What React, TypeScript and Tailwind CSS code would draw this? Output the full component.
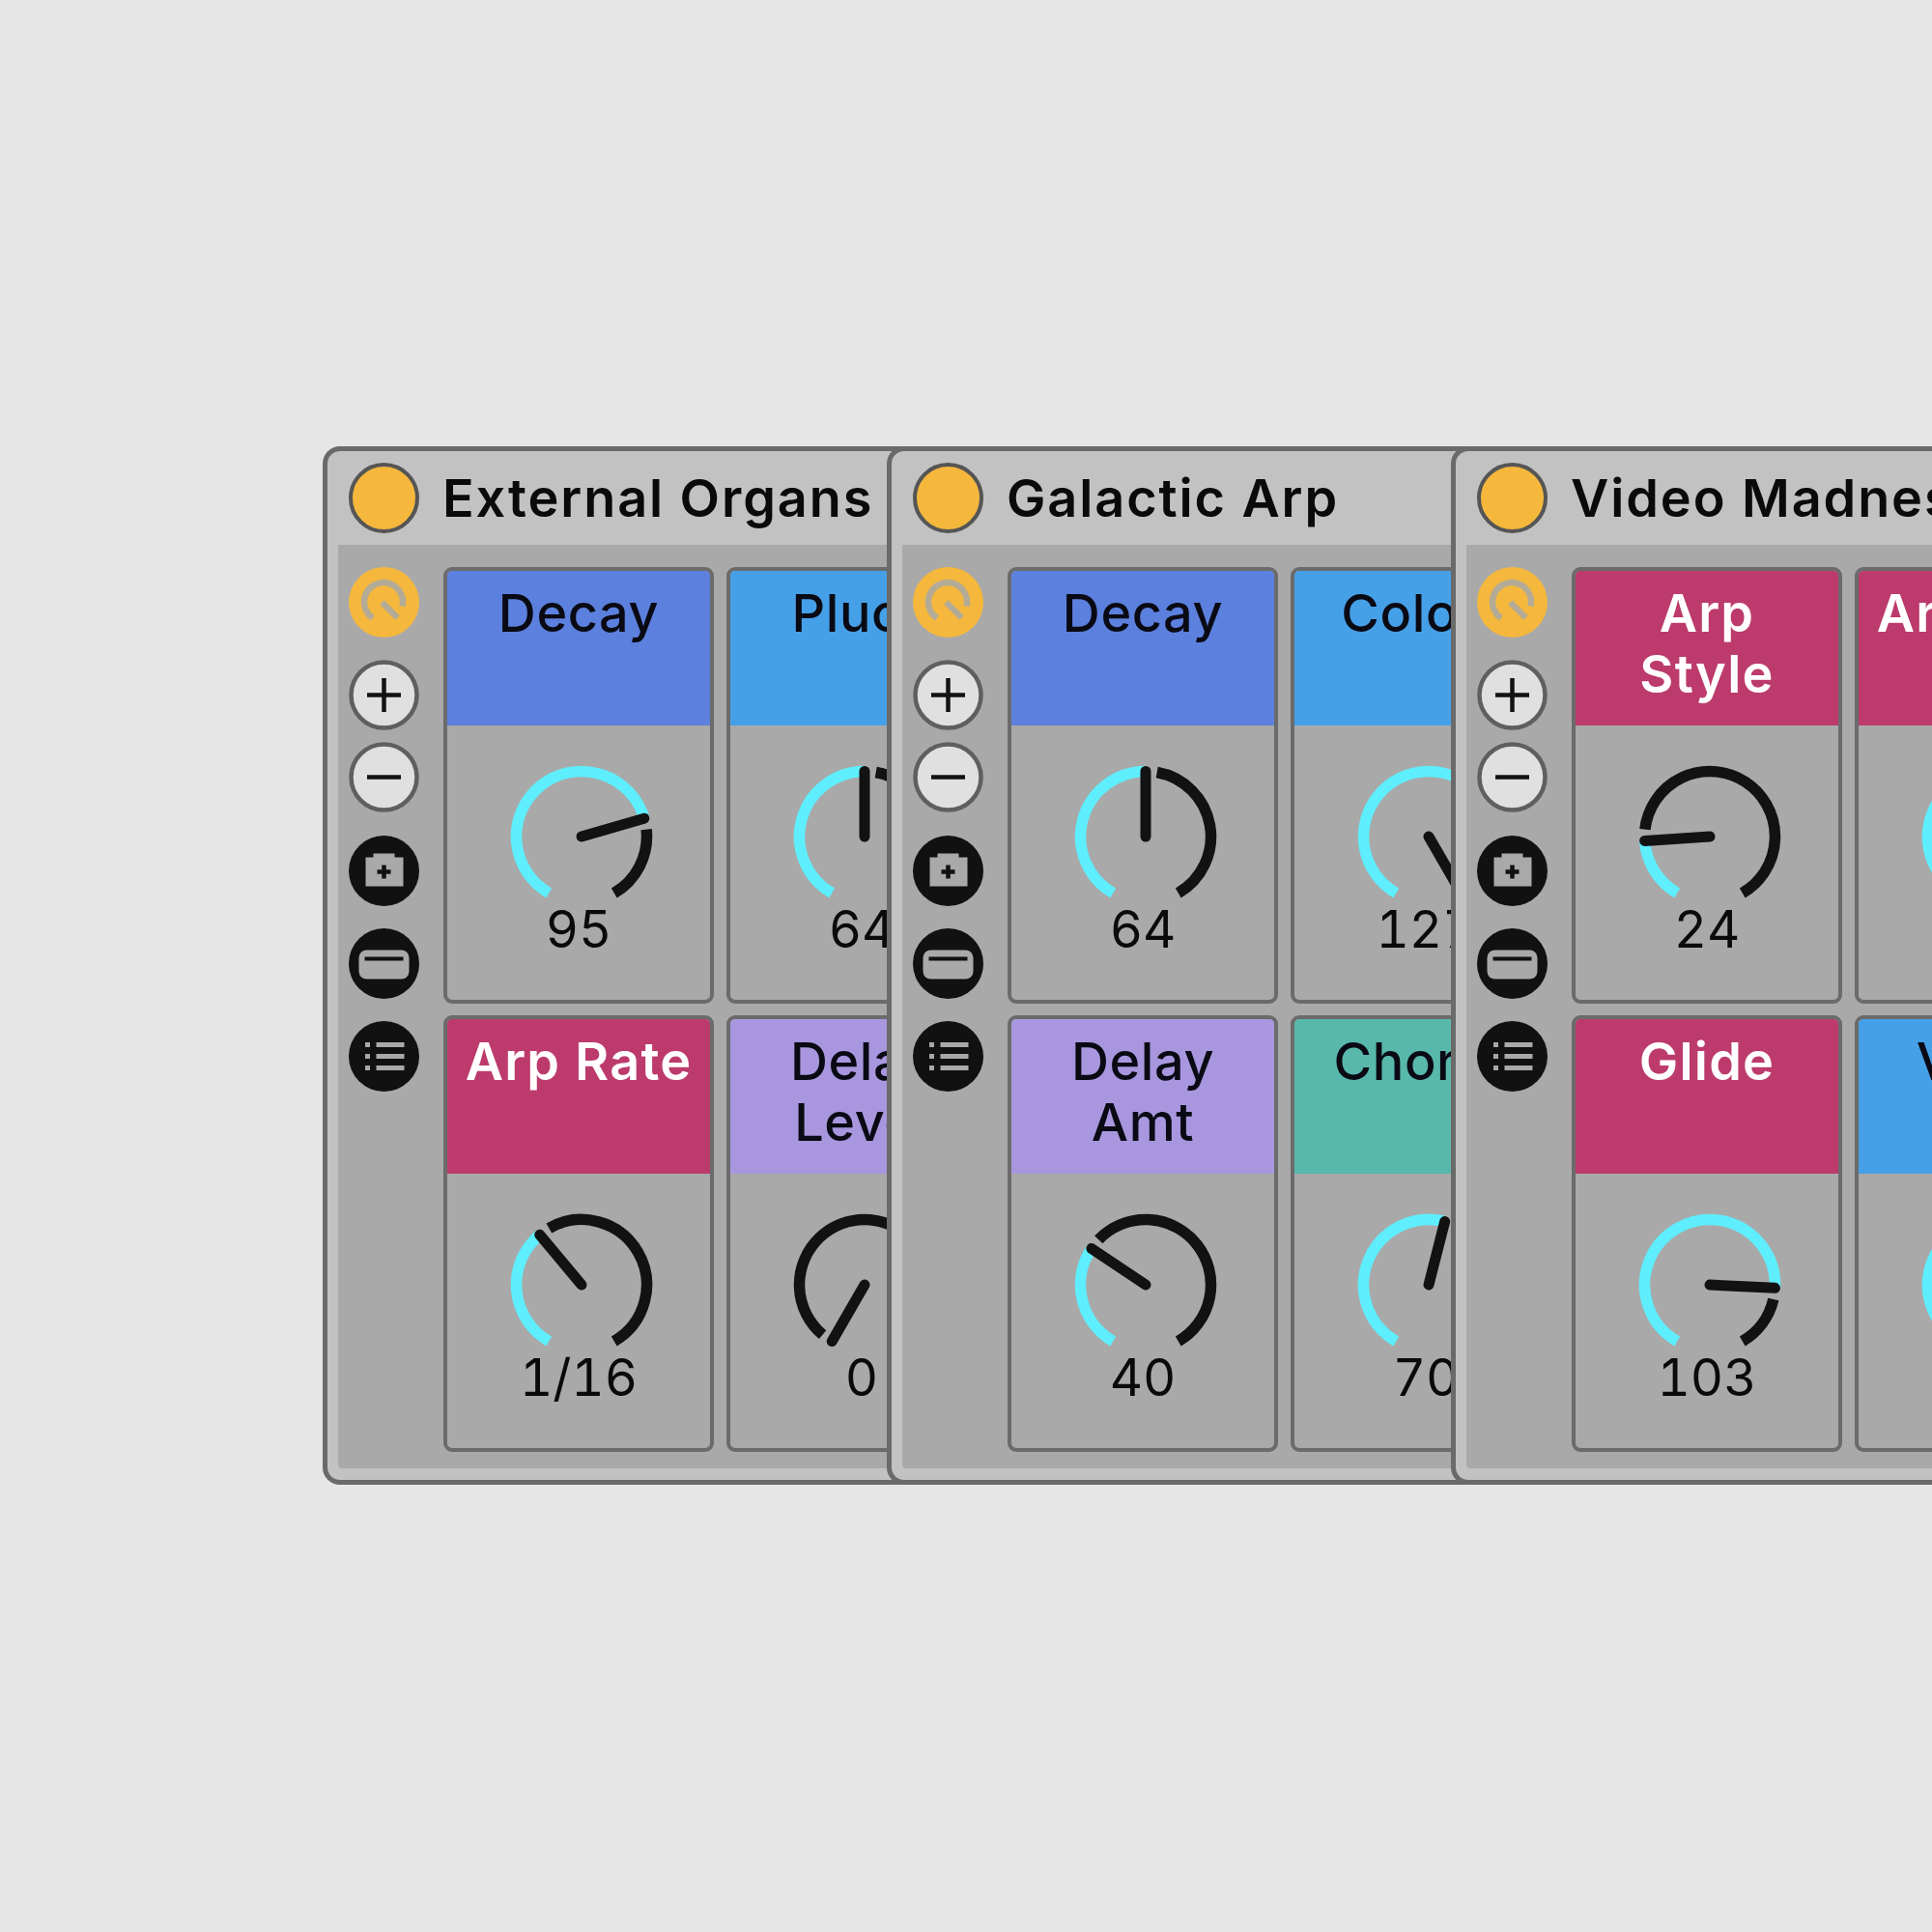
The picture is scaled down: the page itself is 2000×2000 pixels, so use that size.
import React from 'react';

type Cell = { title: string; value: string; knob: number; color: string; light?: boolean };

const BLUE = 'bg-[#5c80dd]';
const SKY = 'bg-[#46a0e8]';
const PINK = 'bg-[#bc3b6c]';
const PURPLE = 'bg-[#a897de]';
const TEAL = 'bg-[#58b8ac]';

const racks: { name: string; cells: Cell[] }[] = [
  {
    name: 'External Organs',
    cells: [
      { title: 'Decay', value: '95', knob: 95, color: BLUE },
      { title: 'Pluck', value: '64', knob: 64, color: SKY },
      { title: 'Arp Rate', value: '1/16', knob: 47, color: PINK, light: true },
      { title: 'Delay\nLevel', value: '0', knob: 0, color: PURPLE },
    ],
  },
  {
    name: 'Galactic Arp',
    cells: [
      { title: 'Decay', value: '64', knob: 64, color: BLUE },
      { title: 'Colour', value: '127', knob: 127, color: SKY },
      { title: 'Delay\nAmt', value: '40', knob: 40, color: PURPLE },
      { title: 'Chorus', value: '70', knob: 70, color: TEAL },
    ],
  },
  {
    name: 'Video Madness',
    cells: [
      { title: 'Arp\nStyle', value: '24', knob: 24, color: PINK, light: true },
      { title: 'Arp Rate', value: '64', knob: 64, color: PINK, light: true },
      { title: 'Glide', value: '103', knob: 103, color: PINK, light: true },
      { title: 'Video', value: '64', knob: 64, color: SKY },
    ],
  },
];

const R = 67.5;

function polar(deg: number, r: number) {
  const a = (deg * Math.PI) / 180;
  return { x: r * Math.sin(a), y: -r * Math.cos(a) };
}

function arc(from: number, to: number) {
  const s = polar(from, R);
  const e = polar(to, R);
  const large = to - from > 180 ? 1 : 0;
  return `M ${s.x} ${s.y} A ${R} ${R} 0 ${large} 1 ${e.x} ${e.y}`;
}

// 64 is the straight-up position of the dial
function knobAngle(value: number) {
  return value >= 64 ? ((value - 64) / 63) * 150 : ((value - 64) / 64) * 150;
}

function Knob({ value }: { value: number }) {
  const angle = knobAngle(value);
  const tip = polar(angle, R);
  return (
    <svg viewBox="-75 -75 150 141" className="ml-[5px] block h-[141px] w-[150px]">
      {value > 0 && <path d={arc(-150, angle)} fill="none" stroke="#5eeefd" strokeWidth="11.5" />}
      {angle + 10 < 150 && <path d={arc(angle + 10, 150)} fill="none" stroke="#121212" strokeWidth="11.5" />}
      <line x1="0" y1="0" x2={tip.x} y2={tip.y} stroke="#121212" strokeWidth="11" strokeLinecap="round" />
    </svg>
  );
}

function KnobCell({ cell }: { cell: Cell }) {
  return (
    <div className="h-[452px] w-[280px] flex-none overflow-hidden rounded-[9px] border-4 border-[#6b6b6b] bg-[#a9a9a9]">
      <div
        className={`h-[160px] whitespace-pre-line pt-3 text-center text-[54px] leading-[63px] ${cell.color} ${
          cell.light ? 'font-semibold tracking-[1.2px] text-white' : 'font-medium tracking-[0.6px] text-[#0a0a14]'
        }`}
      >
        {cell.title}
      </div>
      <div className="flex flex-col items-center pt-[40px]">
        <Knob value={cell.knob} />
        <div className="text-[53px] leading-[60px] text-[#0a0a0a] tabular-nums">{cell.value}</div>
      </div>
    </div>
  );
}

function PowerButton() {
  return (
    <svg viewBox="-36.5 -36.5 73 73" className="h-[73px] w-[73px]">
      <circle r="36.5" fill="#f5b83d" />
      <path d="M -11.5 16.3 A 20 20 0 1 1 19 4" fill="none" stroke="#b3ab96" strokeWidth="6.5" />
      <line x1="-2" y1="0" x2="14" y2="16" stroke="#b3ab96" strokeWidth="6.5" />
    </svg>
  );
}

function LightButton({ plus }: { plus?: boolean }) {
  return (
    <svg viewBox="-36.5 -36.5 73 73" className="h-[73px] w-[73px]">
      <circle r="34" fill="#e0e0e0" stroke="#5f5f5f" strokeWidth="4.5" />
      <line x1="-17.5" y1="0" x2="17.5" y2="0" stroke="#121212" strokeWidth="4.5" />
      {plus && <line x1="0" y1="-17.5" x2="0" y2="17.5" stroke="#121212" strokeWidth="4.5" />}
    </svg>
  );
}

function BatteryButton() {
  return (
    <svg viewBox="-36.5 -36.5 73 73" className="h-[73px] w-[73px]">
      <circle r="36.5" fill="#111111" />
      <path d="M -19 -14 H -11 V -18 H 11 V -14 H 20 V 16 H -19 Z" fill="#a9a9a9" />
      <path d="M -7 1 H 7 M 0 -6 V 8" stroke="#111111" strokeWidth="4.5" />
    </svg>
  );
}

function SlotButton() {
  return (
    <svg viewBox="-36.5 -36.5 73 73" className="h-[73px] w-[73px]">
      <circle r="36.5" fill="#111111" />
      <rect x="-26" y="-14" width="52" height="30" rx="8" fill="#a9a9a9" />
      <line x1="-20" y1="-5" x2="20" y2="-5" stroke="#111111" strokeWidth="4" />
    </svg>
  );
}

function ListButton() {
  return (
    <svg viewBox="-36.5 -36.5 73 73" className="h-[73px] w-[73px]">
      <circle r="36.5" fill="#111111" />
      {[-12, 0, 12].map((y) => (
        <g key={y} fill="#a9a9a9">
          <rect x="-19.5" y={y - 2.5} width="5" height="5" />
          <rect x="-8" y={y - 2.5} width="29" height="5" />
        </g>
      ))}
    </svg>
  );
}

function Rack({ name, cells }: { name: string; cells: Cell[] }) {
  return (
    <div className="relative -mr-[16px] w-[600px] flex-none overflow-hidden rounded-l-[18px] border-y-[5px] border-l-[5px] border-[#6a6a6a] bg-[#c2c2c2]">
      <div className="flex h-[97px] items-center gap-[24px] pl-[22px]">
        <div className="h-[73px] w-[73px] flex-none rounded-full border-4 border-[#555555] bg-[#f5b83d]" />
        <div className="whitespace-nowrap text-[54px] font-semibold tracking-[1.9px] text-[#0a0a0a]">{name}</div>
      </div>
      <div className="mb-[12px] ml-[11px] flex gap-[25px] rounded-bl-[4px] bg-[#a9a9a9] pb-[17px] pl-[11px] pt-[23px]">
        <div className="flex w-[73px] flex-none flex-col items-center">
          <PowerButton />
          <div className="mt-[23px]"><LightButton plus /></div>
          <div className="mt-[12px]"><LightButton /></div>
          <div className="mt-[24px]"><BatteryButton /></div>
          <div className="mt-[23px]"><SlotButton /></div>
          <div className="mt-[23px]"><ListButton /></div>
        </div>
        <div className="grid flex-none grid-cols-[280px_280px] gap-x-[13px] gap-y-[12px]">
          {cells.map((cell) => (
            <KnobCell key={cell.title + cell.value} cell={cell} />
          ))}
        </div>
      </div>
    </div>
  );
}

export default function App() {
  return (
    <div className="flex h-[2000px] w-[2000px] items-start overflow-hidden bg-[#e6e6e6] pl-[334px] pt-[462px] font-[Inter,sans-serif]">
      {racks.map((rack) => (
        <Rack key={rack.name} name={rack.name} cells={rack.cells} />
      ))}
    </div>
  );
}
